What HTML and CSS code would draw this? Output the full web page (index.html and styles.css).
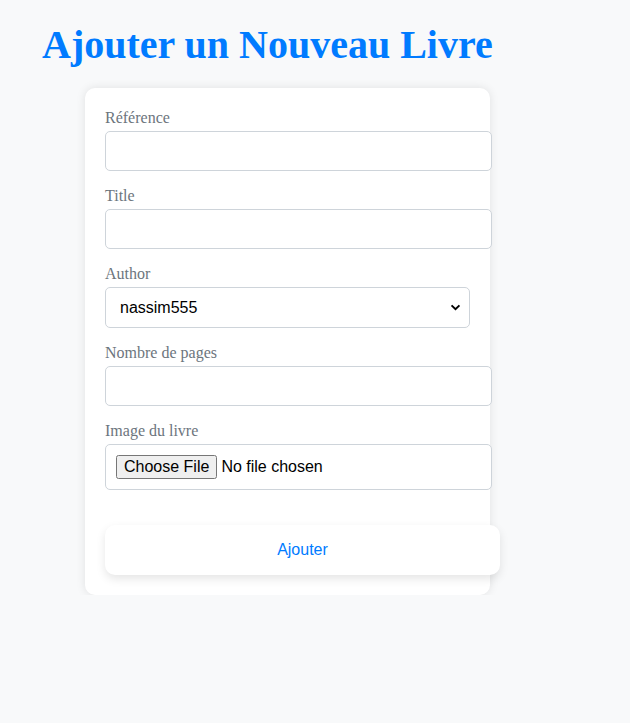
FILE: index.html
```html
<!DOCTYPE html>
<html lang="fr">
<head>
<meta charset="utf-8">
<title>Ajouter un Nouveau Livre</title>
<link rel="stylesheet" href="styles.css">
</head>
<body>
<div class="page">
  <h1 class="title">Ajouter un Nouveau Livre</h1>
  <form class="card">
    <div class="group">
      <label class="label" for="ref">Référence</label>
      <input class="field" id="ref" type="text">
    </div>
    <div class="group">
      <label class="label" for="title">Title</label>
      <input class="field" id="title" type="text">
    </div>
    <div class="group">
      <label class="label" for="author">Author</label>
      <select class="select" id="author">
        <option>nassim555</option>
      </select>
    </div>
    <div class="group">
      <label class="label" for="pages">Nombre de pages</label>
      <input class="field" id="pages" type="number">
    </div>
    <div class="group">
      <label class="label" for="img">Image du livre</label>
      <input class="field file" id="img" type="file">
    </div>
    <button class="submit" type="button">Ajouter</button>
  </form>
</div>
</body>
</html>
```
FILE: styles.css
```css
html, body {
  margin: 0;
  padding: 0;
  background: #f8f9fa;
}
body {
  font-family: "Liberation Serif", "Times New Roman", serif;
}
.page {
  padding: 23px 0 0 42px;
}
.title {
  margin: 0 0 21px;
  font-size: 40px;
  line-height: 44px;
  font-weight: bold;
  color: #007bff;
}
.card {
  margin-left: 43px;
  width: 365px;
  padding: 20px;
  background: #fff;
  border-radius: 10px;
  box-shadow: 0 0 10px rgba(0, 0, 0, 0.1);
}
.group {
  margin-bottom: 15px;
}
.label {
  display: block;
  margin-bottom: 5px;
  padding-top: 1px;
  font-size: 16px;
  line-height: 17px;
  color: #6c757d;
}
.field {
  display: block;
  width: 100%;
  height: 18px;
  padding: 10px;
  border: 1px solid #ced4da;
  border-radius: 5px;
  font-family: "Liberation Sans", Arial, sans-serif;
  font-size: 16px;
  background: #fff;
  margin: 0;
}
.file {
  height: 24px;
}
.select {
  display: block;
  width: 100%;
  height: 41px;
  padding: 0 30px 0 14px;
  border: 1px solid #ced4da;
  border-radius: 5px;
  font-family: "Liberation Sans", Arial, sans-serif;
  font-size: 16px;
  color: #000;
  margin: 0;
  -webkit-appearance: none;
  appearance: none;
  background-color: #fff;
  background-image: url("data:image/svg+xml,%3Csvg xmlns='http://www.w3.org/2000/svg' width='12' height='8' viewBox='0 0 12 8'%3E%3Cpath d='M1.5 1.5 L6 6 L10.5 1.5' fill='none' stroke='%23000' stroke-width='2.2'/%3E%3C/svg%3E");
  background-repeat: no-repeat;
  background-position: right 8px center;
  background-size: 11px 7px;
}
.submit {
  display: block;
  margin-top: 35px;
  width: 395px;
  height: 50px;
  padding: 15px;
  border: none;
  border-radius: 10px;
  background: #fff;
  color: #007bff;
  font-family: "Liberation Sans", Arial, sans-serif;
  font-size: 16px;
  box-shadow: 0 4px 10px rgba(0, 0, 0, 0.1);
  cursor: pointer;
}
```
